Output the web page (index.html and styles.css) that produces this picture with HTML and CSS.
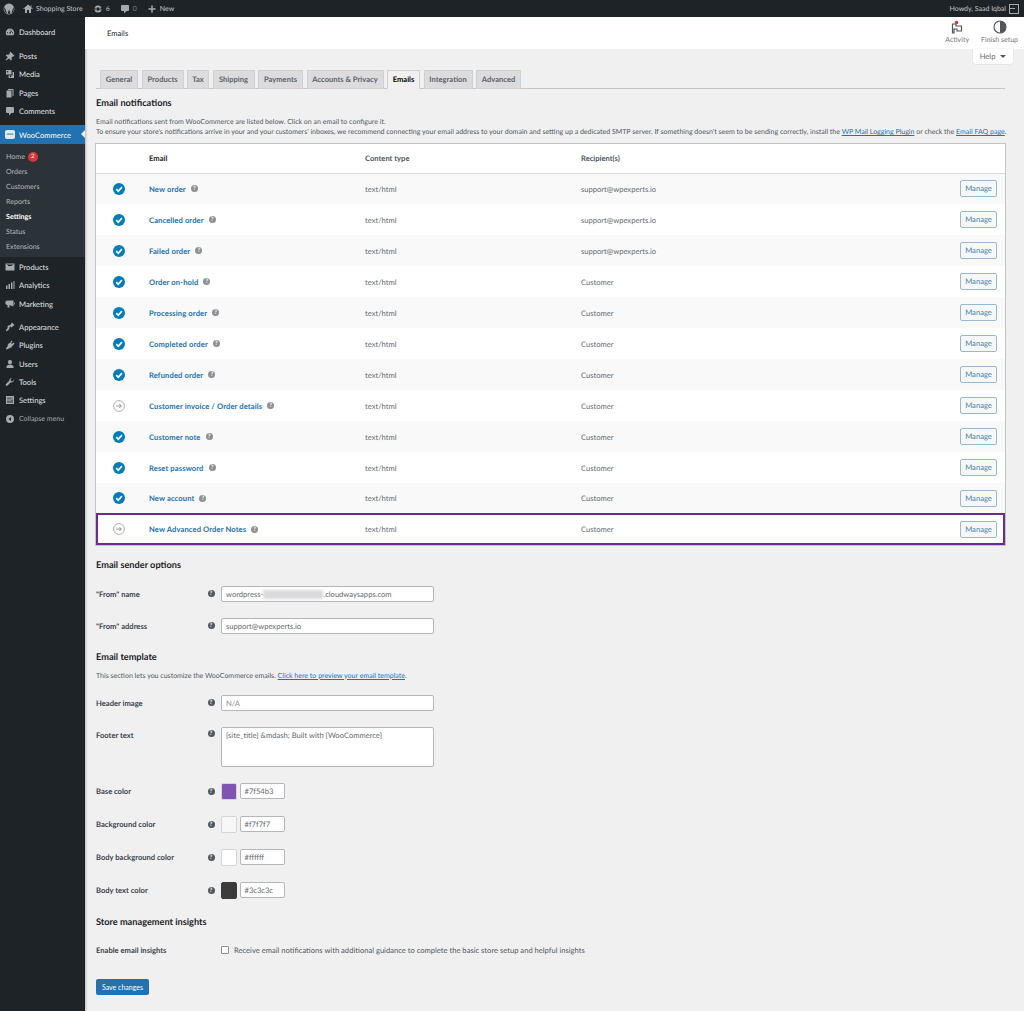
FILE: index.html
```html
<!DOCTYPE html>
<html lang="en">
<head>
    <meta charset="UTF-8">
    <title>Emails</title>
    <link rel="stylesheet" href="styles.css">
</head>
<body>
    <svg class="sprite" width="0" height="0">
        <symbol id="i-wp" viewBox="0 0 20 20"><path d="M10 1a9 9 0 1 0 0 18 9 9 0 0 0 0-18zM2 10c0-1.200.3-2.300.7-3.300l3.800 10.500A8 8 0 0 1 2 10zm8 8c-.8 0-1.500-.1-2.300-.3l2.400-7 2.500 6.800A8 8 0 0 1 10 18zm1.100-11.800l2.900 8.600.8-2.700c.3-1.100.6-1.900.6-2.600 0-1-.4-1.700-.7-2.200-.4-.7-.8-1.200-.8-1.900 0-.7.600-1.400 1.300-1.400h.1A8 8 0 0 0 3.400 5.500h.5c.8 0 2.100-.1 2.100-.1.400 0 .5.600 0 .7l-.9.100 2.900 8.600 1.700-5.200-1.200-3.400-.9-.1c-.4 0-.4-.7.100-.7 0 0 1.300.1 2.100.1s2.100-.1 2.100-.1c.4 0 .5.600 0 .7zm2.900 10.700l2.400-7c.5-1.100.6-2 .6-2.800 0-.3 0-.6-.1-.8A8 8 0 0 1 14 16.900z"/></symbol>
        <symbol id="i-home" viewBox="0 0 20 20"><path d="M16 8.500l1.500 1.500H20L10 1 0 10h2.500L4 8.500V18h4v-6h4v6h4zM15 3h2v4l-2-2z"/></symbol>
        <symbol id="i-update" viewBox="0 0 20 20"><path fill-rule="evenodd" d="M10 3a7 7 0 1 1 0 14 7 7 0 0 1 0-14zm0 3.500a3.500 3.500 0 1 0 0 7 3.500 3.500 0 0 0 0-7zM1 10l4-3v6zm18 0l-4 3V7z"/></symbol>
        <symbol id="i-comment" viewBox="0 0 20 20"><path d="M4 2h12a2 2 0 0 1 2 2v8a2 2 0 0 1-2 2h-3l-5 5v-5H4a2 2 0 0 1-2-2V4a2 2 0 0 1 2-2z"/></symbol>
        <symbol id="i-plus" viewBox="0 0 20 20"><path d="M17 8.500h-5.500V3h-3v5.500H3v3h5.500V17h3v-5.500H17z"/></symbol>
        <symbol id="i-gauge" viewBox="0 0 20 20"><path fill-rule="evenodd" d="M10 3a8.500 8.500 0 0 0-8.500 8.500c0 2 .7 3.800 1.800 5.200h13.400a8.500 8.500 0 0 0 1.800-5.200A8.500 8.500 0 0 0 10 3zm-.9 2h1.800v2H9.100zM4 10.500h2v1.800H4zm9-3.700l1.300 1.300-3 3.400a1.500 1.500 0 1 1-1.300-1.200zm1 3.700h2v1.800h-2z"/></symbol>
        <symbol id="i-pin" viewBox="0 0 20 20"><path d="M10.500 1l8.500 8.500-1.500 1.500-1.500-.5-3 3 .5 4-1.500 1.500-4-4L2 19l-1-1 4.500-5.500-4-4L3 7l4 .5 3-3-.5-2z"/></symbol>
        <symbol id="i-media" viewBox="0 0 20 20"><path fill-rule="evenodd" d="M2 2h11v9H2zm3 2a1.500 1.500 0 1 0 0 3 1.500 1.500 0 0 0 0-3zM15 6h3v12H7v-5h8zm-4 7.500a1.500 1.500 0 1 0 0 3 1.500 1.500 0 0 0 0-3z"/></symbol>
        <symbol id="i-pages" viewBox="0 0 20 20"><path d="M6 2h11v14h-2V4H6zM3 5h10v14H3z"/></symbol>
        <symbol id="i-box" viewBox="0 0 20 20"><path fill-rule="evenodd" d="M1 3h18v14H1zm5 3v2h8V6zM3 5v1h14V5z"/></symbol>
        <symbol id="i-chart" viewBox="0 0 20 20"><path d="M2 11h3v7H2zM7 8h3v10H7zM12 5h3v13h-3zM17 2h2v16h-2z"/></symbol>
        <symbol id="i-mega" viewBox="0 0 20 20"><path d="M17 3v12L9 12v5H5v-5a4.500 4.500 0 0 1 0-9zM18 7h1.500v4H18z"/></symbol>
        <symbol id="i-brush" viewBox="0 0 20 20"><path d="M14 1l5 5-6 5-2-2-3 3 1 2-6 5-1-3 4-5-2-1 4-4 2 1z"/></symbol>
        <symbol id="i-plug" viewBox="0 0 20 20"><path d="M13 1l2 2-3 3 2 2 3-3 2 2-3 4-2 1-1 3-4 1-3 2-3 1-1-1 1-3 3-3-1-1 2-4 3-1z"/></symbol>
        <symbol id="i-user" viewBox="0 0 20 20"><path d="M10 2a4 4 0 0 1 4 4.500c0 2-1.500 4-4 4s-4-2-4-4A4 4 0 0 1 10 2zm-2 9.500h4c3 .5 5 2 5 4V18H3v-2.500c0-2 2-3.500 5-4z"/></symbol>
        <symbol id="i-wrench" viewBox="0 0 20 20"><path d="M18 5a5 5 0 0 1-6.500 5.500L5 17a2 2 0 0 1-3-3l6.500-6.500A5 5 0 0 1 14 2l-3 3 1 3 3 1z"/></symbol>
        <symbol id="i-sliders" viewBox="0 0 20 20"><path fill-rule="evenodd" d="M2 2h16v16H2zm3 9v5h2v-5zm0-6v4h2V5zm4 6v5h2v-5zm4-2v7h2V9zm0-4v2h2V5zM9 5v4h2V5z"/></symbol>
        <symbol id="i-collapse" viewBox="0 0 20 20"><path fill-rule="evenodd" d="M10 2a8 8 0 1 0 0 16 8 8 0 0 0 0-16zm2 4v8L7 10z"/></symbol>
        <symbol id="i-check" viewBox="0 0 12 12"><circle cx="6" cy="6" r="6" fill="#007cba"/><path d="M3.200 6.200l2 2 3.700-4.100" fill="none" stroke="#fff" stroke-width="1.700"/></symbol>
        <symbol id="i-arrow" viewBox="0 0 12 12"><circle cx="6" cy="6" r="5.400" fill="#fff" stroke="#a5a5a5" stroke-width=".9"/><path d="M3.300 6h5M6.300 4l2 2-2 2" fill="none" stroke="#8a8a8a" stroke-width=".9"/></symbol>
    </svg>

    <div class="adminbar">
        <div class="bar-left">
            <svg class="bar-wp"><use href="#i-wp"/></svg>
            <span class="bar-item"><svg class="bar-ico"><use href="#i-home"/></svg>Shopping Store</span>
            <span class="bar-item"><svg class="bar-ico"><use href="#i-update"/></svg>6</span>
            <span class="bar-item muted"><svg class="bar-ico"><use href="#i-comment"/></svg>0</span>
            <span class="bar-item"><svg class="bar-ico"><use href="#i-plus"/></svg>New</span>
        </div>
        <div class="bar-right">Howdy, Saad Iqbal<span class="avatar"></span></div>
    </div>

    <div class="layout">
        <nav class="sidebar">
            <a class="menu-item top"><svg><use href="#i-gauge"/></svg>Dashboard</a>
            <div class="menu-group">
                <a class="menu-item"><svg><use href="#i-pin"/></svg>Posts</a>
                <a class="menu-item"><svg><use href="#i-media"/></svg>Media</a>
                <a class="menu-item"><svg><use href="#i-pages"/></svg>Pages</a>
                <a class="menu-item"><svg><use href="#i-comment"/></svg>Comments</a>
            </div>
            <a class="menu-item current"><span class="woo-logo">woo</span>WooCommerce</a>
            <div class="submenu">
                <a>Home <span class="count">2</span></a>
                <a>Orders</a>
                <a>Customers</a>
                <a>Reports</a>
                <a class="on">Settings</a>
                <a>Status</a>
                <a>Extensions</a>
            </div>
            <div class="menu-plain">
                <a class="menu-item"><svg><use href="#i-box"/></svg>Products</a>
                <a class="menu-item"><svg><use href="#i-chart"/></svg>Analytics</a>
                <a class="menu-item"><svg><use href="#i-mega"/></svg>Marketing</a>
            </div>
            <div class="menu-group">
                <a class="menu-item"><svg><use href="#i-brush"/></svg>Appearance</a>
                <a class="menu-item"><svg><use href="#i-plug"/></svg>Plugins</a>
                <a class="menu-item"><svg><use href="#i-user"/></svg>Users</a>
                <a class="menu-item"><svg><use href="#i-wrench"/></svg>Tools</a>
                <a class="menu-item"><svg><use href="#i-sliders"/></svg>Settings</a>
                <a class="menu-item collapse"><svg><use href="#i-collapse"/></svg>Collapse menu</a>
            </div>
        </nav>

        <main class="main">
            <header class="topbar">
                <div class="page-title">Emails</div>
                <div class="top-actions">
                    <div class="top-action">
                        <svg viewBox="0 0 14 14" class="act-ico"><path d="M2.500 13V4h3.500v2h5.500v5H7V9H4v4z" fill="none" stroke="#50575e" stroke-width="1.200"/><circle cx="6.500" cy="2.500" r="1.800" fill="#d63638"/></svg>
                        <span>Activity</span>
                    </div>
                    <div class="top-action">
                        <svg viewBox="0 0 14 14" class="act-ico"><circle cx="7" cy="7" r="6" fill="#fff" stroke="#50575e" stroke-width="1.100"/><path d="M7 1a6 6 0 0 1 0 12z" fill="#50575e"/></svg>
                        <span>Finish setup</span>
                    </div>
                </div>
            </header>
            <div class="help-row"><div class="help-tab">Help <span class="caret"></span></div></div>

            <div class="content">
                <div class="tabs">
                    <a class="tab" style="width:38px">General</a>
                    <a class="tab" style="width:42px">Products</a>
                    <a class="tab" style="width:22px">Tax</a>
                    <a class="tab" style="width:42px">Shipping</a>
                    <a class="tab" style="width:45px">Payments</a>
                    <a class="tab" style="width:77px">Accounts &amp; Privacy</a>
                    <a class="tab active" style="width:33px">Emails</a>
                    <a class="tab" style="width:49px">Integration</a>
                    <a class="tab" style="width:45px">Advanced</a>
                </div>

                <h2 class="first">Email notifications</h2>
                <p class="intro">Email notifications sent from WooCommerce are listed below. Click on an email to configure it.<br>To ensure your store's notifications arrive in your and your customers' inboxes, we recommend connecting your email address to your domain and setting up a dedicated SMTP server. If something doesn't seem to be sending correctly, install the <a href="#">WP Mail Logging Plugin</a> or check the <a href="#">Email FAQ page</a>.</p>

                <table class="emails">
                    <thead>
                        <tr><th></th><th class="dark">Email</th><th>Content type</th><th>Recipient(s)</th><th></th></tr>
                    </thead>
                    <tbody>
                        <tr><td class="st"><svg><use href="#i-check"/></svg></td><td><a class="name">New order</a><span class="tip"></span></td><td>text/html</td><td>support@wpexperts.io</td><td class="act"><span class="manage">Manage</span></td></tr>
                        <tr><td class="st"><svg><use href="#i-check"/></svg></td><td><a class="name">Cancelled order</a><span class="tip"></span></td><td>text/html</td><td>support@wpexperts.io</td><td class="act"><span class="manage">Manage</span></td></tr>
                        <tr><td class="st"><svg><use href="#i-check"/></svg></td><td><a class="name">Failed order</a><span class="tip"></span></td><td>text/html</td><td>support@wpexperts.io</td><td class="act"><span class="manage">Manage</span></td></tr>
                        <tr><td class="st"><svg><use href="#i-check"/></svg></td><td><a class="name">Order on-hold</a><span class="tip"></span></td><td>text/html</td><td>Customer</td><td class="act"><span class="manage">Manage</span></td></tr>
                        <tr><td class="st"><svg><use href="#i-check"/></svg></td><td><a class="name">Processing order</a><span class="tip"></span></td><td>text/html</td><td>Customer</td><td class="act"><span class="manage">Manage</span></td></tr>
                        <tr><td class="st"><svg><use href="#i-check"/></svg></td><td><a class="name">Completed order</a><span class="tip"></span></td><td>text/html</td><td>Customer</td><td class="act"><span class="manage">Manage</span></td></tr>
                        <tr><td class="st"><svg><use href="#i-check"/></svg></td><td><a class="name">Refunded order</a><span class="tip"></span></td><td>text/html</td><td>Customer</td><td class="act"><span class="manage">Manage</span></td></tr>
                        <tr><td class="st"><svg><use href="#i-arrow"/></svg></td><td><a class="name">Customer invoice / Order details</a><span class="tip"></span></td><td>text/html</td><td>Customer</td><td class="act"><span class="manage">Manage</span></td></tr>
                        <tr><td class="st"><svg><use href="#i-check"/></svg></td><td><a class="name">Customer note</a><span class="tip"></span></td><td>text/html</td><td>Customer</td><td class="act"><span class="manage">Manage</span></td></tr>
                        <tr><td class="st"><svg><use href="#i-check"/></svg></td><td><a class="name">Reset password</a><span class="tip"></span></td><td>text/html</td><td>Customer</td><td class="act"><span class="manage">Manage</span></td></tr>
                        <tr class="short"><td class="st"><svg><use href="#i-check"/></svg></td><td><a class="name">New account</a><span class="tip"></span></td><td>text/html</td><td>Customer</td><td class="act"><span class="manage">Manage</span></td></tr>
                        <tr class="marked"><td class="st"><svg><use href="#i-arrow"/></svg></td><td><a class="name">New Advanced Order Notes</a><span class="tip"></span></td><td>text/html</td><td>Customer</td><td class="act"><span class="manage">Manage</span></td></tr>
                    </tbody>
                </table>

                <h2 class="sender">Email sender options</h2>
                <div class="form-row">
                    <label>"From" name</label><span class="tip dark"></span>
                    <div class="field">wordpress-<span class="redact"></span>.cloudwaysapps.com</div>
                </div>
                <div class="form-row">
                    <label>"From" address</label><span class="tip dark"></span>
                    <div class="field">support@wpexperts.io</div>
                </div>

                <h2 class="template">Email template</h2>
                <p class="template-note">This section lets you customize the WooCommerce emails. <a href="#">Click here to preview your email template</a>.</p>
                <div class="form-row">
                    <label>Header image</label><span class="tip dark"></span>
                    <div class="field placeholder">N/A</div>
                </div>
                <div class="form-row tall">
                    <label>Footer text</label><span class="tip dark"></span>
                    <div class="field area">{site_title} &amp;mdash; Built with {WooCommerce}</div>
                </div>

                <div class="form-row color">
                    <label>Base color</label><span class="tip dark"></span>
                    <span class="swatch base"></span><div class="field hex">#7f54b3</div>
                </div>
                <div class="form-row color">
                    <label>Background color</label><span class="tip dark"></span>
                    <span class="swatch bg"></span><div class="field hex">#f7f7f7</div>
                </div>
                <div class="form-row color">
                    <label>Body background color</label><span class="tip dark"></span>
                    <span class="swatch body"></span><div class="field hex">#ffffff</div>
                </div>
                <div class="form-row color">
                    <label>Body text color</label><span class="tip dark"></span>
                    <span class="swatch text"></span><div class="field hex">#3c3c3c</div>
                </div>

                <h2 class="insights">Store management insights</h2>
                <div class="form-row check-row">
                    <label>Enable email insights</label><span class="tip none"></span>
                    <span class="checkbox"></span>
                    <span class="check-label">Receive email notifications with additional guidance to complete the basic store setup and helpful insights</span>
                </div>

                <button class="save">Save changes</button>
            </div>
        </main>
    </div>
</body>
</html>
```

FILE: styles.css
```css
* {
    box-sizing: border-box;
}
html, body {
    margin: 0;
    padding: 0;
}
body {
    font-family: Lato, "Open Sans", sans-serif;
    font-size: 7.6px;
    line-height: 10px;
    text-rendering: geometricPrecision;
    color: #50575e;
    background: #f0f0f1;
    height: 1011px;
    overflow: hidden;
}
a {
    color: #2271b1;
}
.sprite {
    display: block;
    height: 0;
}

/* admin bar */
.adminbar {
    height: 17px;
    background: #1d2327;
    color: #c3c4c7;
    display: flex;
    justify-content: space-between;
    align-items: center;
    padding: 0 5px 0 3px;
    font-size: 7px;
}
.bar-left {
    display: flex;
    align-items: center;
}
.bar-wp {
    width: 12px;
    height: 12px;
    fill: #a7aaad;
    margin-right: 8px;
}
.bar-item {
    display: flex;
    align-items: center;
    margin-right: 10px;
}
.bar-ico {
    width: 10px;
    height: 10px;
    fill: #a7aaad;
    margin-right: 3px;
}
.bar-item.muted {
    color: #787c82;
}
.bar-right {
    display: flex;
    align-items: center;
}
.avatar {
    width: 10px;
    height: 10px;
    margin-left: 3px;
    border: 1px solid #a7aaad;
    background: linear-gradient(#a7aaad, #a7aaad) left center / 5px 1px no-repeat;
}

/* sidebar */
.layout {
    display: flex;
    height: 994px;
}
.sidebar {
    width: 85px;
    flex: none;
    background: #1d2327;
    color: #f0f0f1;
    padding-top: 6px;
    box-shadow: 1px 0 2px rgba(0,0,0,0.25);
}
.menu-item {
    display: flex;
    align-items: center;
    height: 18.3px;
    padding-left: 5px;
    color: #e2e4e6;
}
.menu-item svg {
    width: 10px;
    height: 10px;
    fill: #a7aaad;
    margin-right: 4px;
    flex: none;
}
.menu-item.top {
    margin-bottom: 5.5px;
}
.menu-group {
    margin-bottom: 5.5px;
}
.menu-item.current {
    position: relative;
    background: #2271b1;
    color: #fff;
    height: 19px;
}
.menu-item.current::after {
    content: "";
    position: absolute;
    right: 0;
    top: 5px;
    border: 4px solid transparent;
    border-right-color: #f0f0f1;
    border-left-width: 0;
}
.woo-logo {
    width: 10px;
    height: 9px;
    margin-right: 4px;
    border-radius: 2px;
    background: #dfeaf4;
    color: #2271b1;
    font-size: 3.4px;
    line-height: 9px;
    font-weight: 700;
    text-align: center;
    flex: none;
}
.submenu {
    background: #2c3338;
    padding: 5px 0 3px;
}
.submenu a {
    display: block;
    height: 15px;
    line-height: 15px;
    padding-left: 6px;
    color: #b4b9be;
    font-size: 7.1px;
}
.submenu a.on {
    color: #fff;
    font-weight: 700;
}
.count {
    display: inline-block;
    width: 10px;
    height: 10px;
    line-height: 10px;
    margin-left: 1px;
    border-radius: 50%;
    background: #d63638;
    color: #fff;
    text-align: center;
    font-size: 6px;
    vertical-align: 1px;
}
.menu-plain {
    padding-top: 0.5px;
    margin-bottom: 5px;
}
.menu-item.collapse {
    color: #a7aaad;
    font-size: 7px;
    margin-top: 0.5px;
}

/* header */
.main {
    flex: 1;
    min-width: 0;
}
.topbar {
    height: 32px;
    background: #fff;
    display: flex;
    justify-content: space-between;
    align-items: center;
    padding: 0 6px 0 22px;
}
.page-title {
    color: #1d2327;
}
.top-actions {
    display: flex;
    gap: 12px;
    margin-top: -1px;
}
.top-action {
    display: flex;
    flex-direction: column;
    align-items: center;
    color: #757575;
    font-size: 7px;
}
.act-ico {
    width: 14px;
    height: 14px;
    margin-bottom: 1px;
}
.help-row {
    display: flex;
    justify-content: flex-end;
    padding-right: 11px;
    height: 0;
}
.help-tab {
    width: 40px;
    height: 15px;
    line-height: 14px;
    background: #fff;
    text-align: center;
    color: #646970;
    border-radius: 0 0 2px 2px;
    box-shadow: 0 0 1px rgba(0,0,0,0.3);
}
.caret {
    display: inline-block;
    margin-left: 3px;
    border: 3px solid transparent;
    border-top: 3.500px solid #50575e;
    border-bottom: 0;
    vertical-align: 1px;
}

/* content */
.content {
    padding: 21px 19px 0 11px;
}
.tabs {
    display: flex;
    gap: 3.500px;
    height: 19px;
    padding-left: 4px;
    border-bottom: 1px solid #c3c4c7;
}
.tab {
    height: 19px;
    line-height: 17px;
    text-align: center;
    background: #dcdcde;
    border: 1px solid #cfd0d2;
    color: #5c6268;
    font-weight: 700;
    flex: none;
}
.tab.active {
    background: #f0f0f1;
    border-bottom-color: #f0f0f1;
    color: #000;
}
h2 {
    margin: 0;
    font-size: 9.2px;
    line-height: 12px;
    font-weight: 700;
    color: #1d2327;
}
h2.first {
    margin-top: 8px;
}
.intro {
    margin: 8px 0 7px;
    white-space: nowrap;
    font-size: 7.03px;
}
.emails {
    width: 909px;
    border-collapse: collapse;
    table-layout: fixed;
    background: #fff;
    box-shadow: 0 0 0 1px #c3c4c7;
}
.emails th {
    height: 29px;
    text-align: left;
    font-weight: 700;
    color: #50575e;
    padding: 0;
    border-bottom: 1px solid #dcdcde;
}
.emails th.dark {
    color: #1d2327;
}
.emails th:nth-child(1) { width: 53px; }
.emails th:nth-child(2) { width: 216px; }
.emails th:nth-child(3) { width: 216px; }
.emails th:nth-child(4) { width: 340px; }
.emails td {
    height: 31px;
    padding: 0;
    color: #646970;
}
.emails tr.short td {
    height: 30px;
}
.emails tr.marked td {
    height: 32px;
}
.emails tbody tr:nth-child(odd) {
    background: #f9f9f9;
}
.emails tbody tr.marked {
    background: #fff;
    outline: 2px solid #6b2c91;
    outline-offset: -2px;
}
.st svg {
    display: block;
    width: 12px;
    height: 12px;
    margin-left: 17px;
}
.name {
    color: #2271b1;
    font-weight: 700;
    letter-spacing: 0.11px;
}
.tip {
    display: inline-block;
    width: 7px;
    height: 7px;
    margin-left: 5px;
    border-radius: 50%;
    background: #8c8f94;
    color: #fff;
    text-align: center;
    font-size: 6px;
    line-height: 7px;
    font-weight: 700;
    vertical-align: -0.5px;
    overflow: hidden;
}
.tip::before {
    content: "?";
}
.tip.dark {
    background: #50575e;
    margin: 0 6.5px 0 0;
    flex: none;
}
.tip.none {
    background: none;
    margin: 0 6.5px 0 0;
    flex: none;
}
.tip.none::before {
    content: "";
}
.act {
    text-align: right;
    padding-right: 8px !important;
}
.manage {
    display: inline-block;
    width: 37px;
    height: 17px;
    line-height: 15px;
    text-align: center;
    color: #4a80ad;
    background: #f6f7f7;
    border: 1px solid #9ab8d2;
    border-radius: 2px;
}

/* settings form */
.form-row {
    display: flex;
    align-items: center;
    height: 16px;
    margin-bottom: 16px;
}
.form-row label {
    width: 111.5px;
    flex: none;
    color: #3c434a;
    font-weight: 700;
}
.field {
    width: 213px;
    height: 16px;
    line-height: 14px;
    padding: 0 4px;
    background: #fff;
    border: 1px solid #b4b6b9;
    border-radius: 2px;
    color: #646970;
    white-space: nowrap;
}
.redact {
    display: inline-block;
    width: 60px;
    height: 9px;
    vertical-align: -2px;
    background: #dadadc;
    filter: blur(1.500px);
}
.placeholder {
    color: #8c8f94;
}
.tall {
    height: 40px;
    align-items: flex-start;
    margin-bottom: 16px;
}
.tall label, .tall .tip {
    margin-top: 3px;
}
.area {
    height: 40px;
    padding-top: 0;
}
h2.sender {
    margin: 14px 0 14.5px;
}
h2.template {
    margin: 17.5px 0 6.5px;
}
.template-note {
    margin: 0 0 14px;
    padding-top: 1px;
    font-size: 7.03px;
}
.color {
    height: 17px;
}
.swatch {
    width: 16px;
    height: 17px;
    margin-right: 2.500px;
    border-radius: 2px;
    border: 1px solid #d5d5d7;
    flex: none;
}
.swatch.base { background: #7f54b3; }
.swatch.bg { background: #f7f7f7; }
.swatch.body { background: #fff; }
.swatch.text { background: #3c3c3c; border-color: #3c3c3c; }
.hex {
    width: 45px;
    height: 16px;
}
h2.insights {
    margin: 17.5px 0 17px;
}
.check-row {
    height: 10px;
    margin-bottom: 23.5px;
}
.checkbox {
    width: 8px;
    height: 8px;
    margin-right: 5px;
    background: #fff;
    border: 1px solid #8c8f94;
    border-radius: 1px;
    flex: none;
}
.save {
    display: block;
    width: 53px;
    height: 16px;
    padding: 0;
    border: 0;
    border-radius: 2px;
    background: #2271b1;
    color: #fff;
    font: inherit;
    font-size: 7px;
}
```
